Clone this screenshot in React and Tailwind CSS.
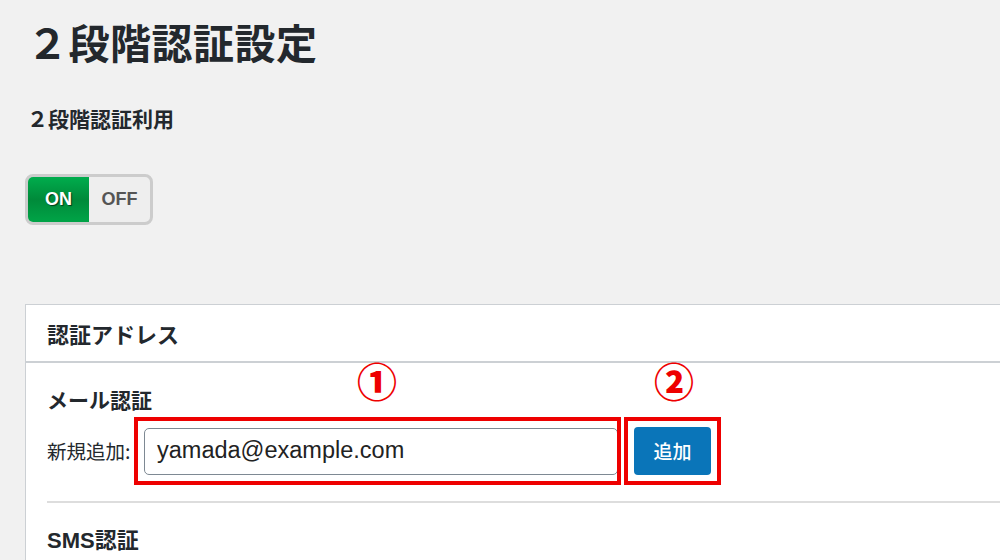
export default function App() {
  const jp = { fontFamily: '"Noto Sans CJK JP", "Noto Sans", sans-serif' };
  const latin = { fontFamily: '"Liberation Sans", "Noto Sans CJK JP", sans-serif' };
  return (
    <div className="w-[1000px] h-[560px] overflow-hidden bg-[#f1f1f1] text-[#23282d] flex flex-col" style={jp}>
      <h1 className="ml-[27px] pt-[18px] text-[41px] leading-[46px] font-bold tracking-[0.5px]">２段階認証設定</h1>
      <h2 className="ml-[27px] mt-[41px] text-[21px] leading-[26px] font-bold">２段階認証利用</h2>
      <div className="ml-[25px] mt-[43px] w-[128px] h-[51px] shrink-0 rounded-[8px] border-[3px] border-[#cccccc] bg-[#eeeeee] flex overflow-hidden">
        <div className="w-[61px] h-full bg-gradient-to-b from-[#00ad4d] via-[#008a3a] to-[#00a447] flex items-center justify-center text-white text-[18px] font-bold [text-shadow:1px_1px_1px_rgba(0,0,0,0.6)]" style={latin}>ON</div>
        <div className="flex-1 h-full flex items-center justify-center text-[#555555] text-[18px] font-bold" style={latin}>OFF</div>
      </div>
      <div className="ml-[25px] mt-[79px] w-[1000px] flex-1 bg-white border-l border-t border-[#ccd0d4]">
        <div className="h-[58px] border-b-[2px] border-[#ccd0d4] pl-[21px] flex items-center text-[22px] font-bold">認証アドレス</div>
        <div className="pl-[21px]">
          <div className="relative">
            <div className="pt-[23px] text-[21px] leading-[26px] font-bold">メール認証</div>
            <div className="absolute left-[310px] top-[-5px] text-[#ee0000] text-[40px] leading-[44px] font-black">①</div>
            <div className="absolute left-[607px] top-[-5px] text-[#ee0000] text-[40px] leading-[44px] font-black">②</div>
          </div>
          <div className="relative mt-[15px] flex items-center h-[48px]">
            <span className="w-[97px] text-[19.5px] text-[#23282d] whitespace-nowrap">新規追加:</span>
            <div className="w-[474px] h-[47px] rounded-[5px] border border-[#7e8993] bg-white flex items-center pl-[12px] text-[23.5px] text-[#222]" style={latin}>yamada@example.com</div>
            <div className="ml-[16px] w-[77px] h-[48px] rounded-[4px] bg-[#0a75b9] flex items-center justify-center text-white text-[19px] font-medium">追加</div>
            <div className="absolute left-[87px] top-[-10px] w-[487px] h-[68px] border-[4px] border-[#ee0000]"></div>
            <div className="absolute left-[577px] top-[-10px] w-[97px] h-[68px] border-[4px] border-[#ee0000]"></div>
          </div>
          <div className="mt-[26px] border-t-[2px] border-[#dddddd]"></div>
          <div className="pt-[22px] text-[22px] leading-[26px] font-bold" style={latin}>SMS<span style={jp}>認証</span></div>
        </div>
      </div>
    </div>
  );
}
